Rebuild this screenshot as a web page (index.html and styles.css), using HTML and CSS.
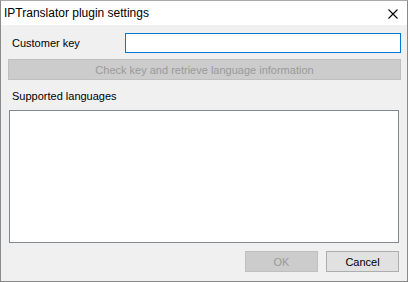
FILE: index.html
```html
<!DOCTYPE html>
<html lang="en">
<head>
  <meta charset="UTF-8">
  <title>IPTranslator plugin settings</title>
  <link rel="stylesheet" href="styles.css">
</head>
<body>
  <div class="window">
    <div class="titlebar">
      <span class="title">IPTranslator plugin settings</span>
      <svg class="close" width="10" height="10" viewBox="0 0 10 10">
        <path d="M0.5 0.5 L9.5 9.5 M9.5 0.5 L0.5 9.5" stroke="#000" stroke-width="1.1" fill="none"/>
      </svg>
    </div>

    <div class="content">
      <div class="key-row">
        <label class="label" for="key">Customer key</label>
        <input id="key" class="key-input" type="text">
      </div>

      <button class="btn btn-wide" disabled>Check key and retrieve language information</button>

      <div class="label section-label">Supported languages</div>
      <div class="listbox"></div>

      <div class="actions">
        <button class="btn btn-small" disabled>OK</button>
        <button class="btn btn-small">Cancel</button>
      </div>
    </div>
  </div>
</body>
</html>
```

FILE: styles.css
```css
body {
  margin: 0;
  padding: 0;
  background-color: #ffffff;
  font-family: "Liberation Sans", Arial, sans-serif;
  font-size: 11px;
  color: #000;
}

.window {
  width: 408px;
  height: 282px;
  box-sizing: border-box;
  border: 1px solid #8a8a8a;
  border-top-color: #aaaaaa;
  background-color: #f0f0f0;
  display: flex;
  flex-direction: column;
}

.titlebar {
  height: 24px;
  background-color: #fff;
  display: flex;
  align-items: center;
  justify-content: space-between;
  padding: 0 9px 0 3px;
}

.title {
  font-size: 12px;
  margin-top: -1px;
}

.close {
  display: block;
  margin-top: 1px;
}

.content {
  flex: 1;
  display: flex;
  flex-direction: column;
  padding: 8px 6px 0 7px;
}

.key-row {
  display: flex;
  align-items: center;
  height: 20px;
}

.label {
  line-height: 13px;
  padding-left: 4px;
}

.key-row .label {
  flex: 1;
  margin-top: 1px;
}

.key-input {
  width: 276px;
  height: 20px;
  box-sizing: border-box;
  margin: 0;
  border: 1px solid #0078d7;
  background: #fff;
  outline: none;
  padding: 0 2px;
}

.btn {
  box-sizing: border-box;
  height: 21px;
  margin: 0;
  padding: 0;
  font-family: inherit;
  font-size: 11px;
  background-color: #e1e1e1;
  border: 1px solid #adadad;
  color: #000;
}

.btn:disabled {
  background-color: #cccccc;
  border-color: #bfbfbf;
  color: #9a9a9a;
}

.btn-wide {
  width: 100%;
  margin-top: 6px;
}

.section-label {
  margin-top: 10px;
  margin-bottom: 7px;
}

.listbox {
  height: 133px;
  box-sizing: border-box;
  margin: 0 2px 0 1px;
  border: 1px solid #828790;
  background-color: #fff;
}

.actions {
  display: flex;
  justify-content: flex-end;
  gap: 8px;
  margin-top: 8px;
  margin-right: 2px;
}

.btn-small {
  width: 73px;
}
```
